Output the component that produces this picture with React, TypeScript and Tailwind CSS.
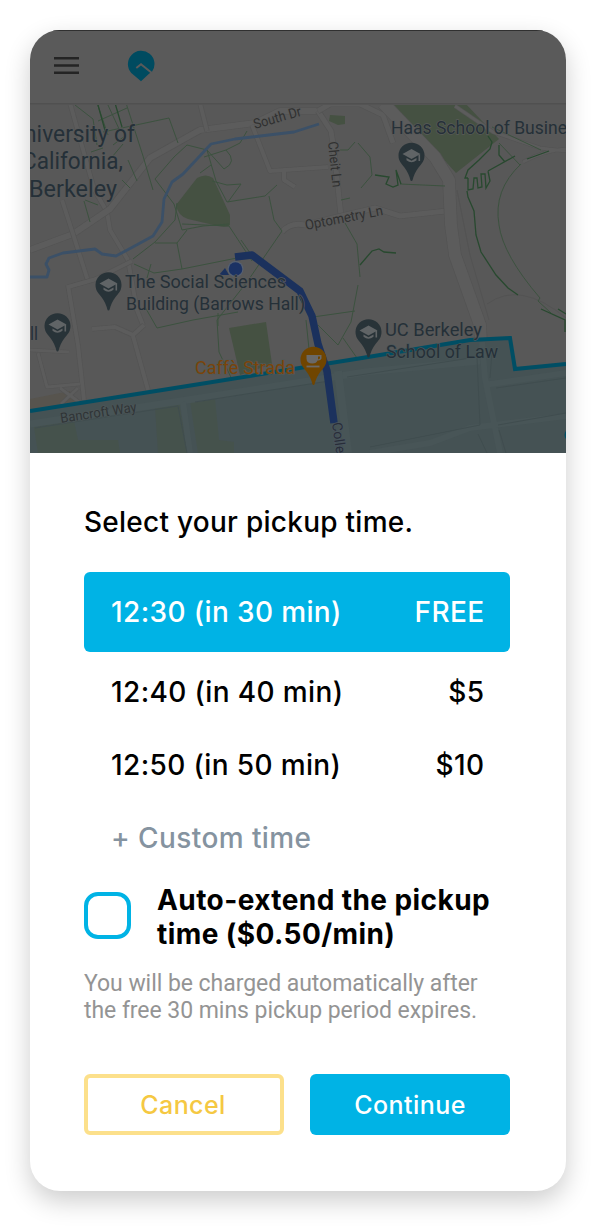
const label = "Roboto, 'Open Sans', sans-serif";

function Road({ d, w = 5 }: { d: string; w?: number }) {
  return (
    <g fill="none" strokeLinejoin="round">
      <path d={d} stroke="#535353" strokeWidth={w + 1.2} />
      <path d={d} stroke="#5c5c5c" strokeWidth={w} />
    </g>
  );
}

function Pin({ x, y, color = '#283338' }: { x: number; y: number; color?: string }) {
  return (
    <g transform={`translate(${x} ${y})`}>
      <path d="M0 25.500c-1.300 0-1.300-2-1.800-3.500C-3.600 16.500-6 13-9.500 9A13 13 0 1 1 9.500 9C6 13 3.600 16.500 1.800 22c-.5 1.500-.5 3.500-1.800 3.500z" fill={color} />
    </g>
  );
}

function SchoolPin({ x, y }: { x: number; y: number }) {
  return (
    <g>
      <Pin x={x} y={y} />
      <g transform={`translate(${x} ${y})`}>
        <path d="M-9-1.500 0-6.500 9-1.500 0 3.500z" fill="#606466" />
        <path d="M-5 2.500v2.200q5 4 10 0V2.500L0 5.200z" fill="#606466" />
        <path d="M7.800-1v6.500" stroke="#606466" strokeWidth="1.600" />
      </g>
    </g>
  );
}

function MapLabel({ x, y, w, size, children, fill = '#253038', halo = '#595a5a', rotate = 0 }: { x: number; y: number; w: number; size: number; children: string; fill?: string; halo?: string; rotate?: number }) {
  return (
    <text
      x={x}
      y={y}
      textLength={w}
      lengthAdjust="spacingAndGlyphs"
      fontSize={size}
      fontFamily={label}
      fontWeight="430"
      fill={fill}
      stroke={halo}
      strokeWidth="1.300"
      paintOrder="stroke"
      transform={`rotate(${rotate} ${x} ${y})`}
    >
      {children}
    </text>
  );
}

function CampusMap() {
  return (
    <svg viewBox="30 103 536 350" className="block h-[350px] w-[536px] shrink-0" aria-label="Map of pickup area">
      <rect x="30" y="103" width="536" height="350" fill="#585858" />

      <g fill="#455142">
        <path d="M176 205 197 178Q206 173 213 178L230 215V225Q227 228 218 226L188 219Q178 216 176 205z" />
        <path d="M392 103H465L499 139 456 173z" />
        <path d="M330 115 345 116V124L338 125 329 121z" />
        <path d="M229 328 266 322 272 364 240 375z" />
      </g>
      <path d="M30 399 70 391 77 405 30 411z" fill="#57544e" />

      <Road d="M70 103 94 189 107 212 110 230 128 260 137 310 143 325" w={4} />
      <Road d="M30 250 73 234 110 209 150 158 200 130 255 123 280 111 318 111" w={6} />
      <Road d="M62 200 73 234 88 281" w={4} />
      <Road d="M200 103 207 131M252 125 270 171 285 170 328 167M284 170 284 180 295 187" w={4} />
      <Road d="M318 111 331 131 334 150 341 216" w={5} />
      <Road d="M318 111 330 104H360L383 115 393 143" w={5} />
      <Road d="M282 232Q290 222 305 225L341 216 375 208 400 216 446 211" w={5} />
      <Road d="M383 103 435 157 449 180 451 225 455 255 480 325 483 376 493 453" w={12} />
      <Road d="M68 285 78 345 84 400M68 287 96 279 132 261M92 329 115 327 133 335 144 325M133 336 148 390" w={4} />
      <Road d="M38 353 47 387 80 384M60 388 79 402M78 388 61 404M30 350 69 352" w={3} />
      <Road d="M455 106 493 132 540 148 566 151M523 162Q545 150 566 149" w={3} />

      <g fill="none" stroke="#535353" strokeWidth="1">
        <path d="M487 304Q520 280 566 318" />
        <path d="M457 190 470 255 489 320" />
      </g>

      <g fill="none" stroke="#3c523f" strokeWidth="1">
        <path d="M75 105 93 119 97 145M97 103 108 135M107 103 120 131M126 103 143 156 153 190M98 121 127 108M103 132 169 118 178 143M113 145 126 135M91 152 103 148M112 157 123 144M128 160 137 181" />
        <path d="M155 179 174 204 182 230 203 226 229 224M155 179 174 157 187 145 207 150 216 181 227 202 265 196 277 185M133 259 155 242 175 220 177 203M155 243 177 243 182 269 154 273 134 264M177 243 187 230M151 264 147 278M182 269 237 258" />
        <path d="M204 157 226 150 240 143 247 131M226 150Q238 162 224 169L207 150M212 181 227 185 241 184 228 202M200 173 211 165" />
        <path d="M269 196 274 220 282 231 247 282 217 320 219 352 235 386M182 224 229 226 252 261M241 240 255 260" />
        <path d="M85 200 98 205M84 201 90 222M122 180 130 188M145 307 157 328 193 320 238 312M218 313 218 326M313 317 355 311M306 320 309 349M318 325 338 345 351 322 358 285M343 338 357 358" />
        <path d="M340 150 348 150 355 142M358 143 370 157 372 175 361 188M341 200 350 198M345 223 357 244 360 277M492 127 541 150M499 143 520 165M400 184 445 186" />
        <path d="M521 164Q493 190 499 225Q503 255 540 298L538 301 551 313" />
      </g>
      <g fill="none" stroke="#28492f" strokeWidth="1.300">
        <path d="M98 105 106 134M115 103 122 127M360 265 372 251 379 249 384 252 396 253M375 175 389 177 386 184 393 187 398 185 396 170 401 184" />
        <path d="M488 136 492 142 490 149 479 160 468 170 465 178 468 178M488 171 515 156 M499 145 499 155 505 162M468 178 468 190 473 189 474 178 477 178 478 188 482 187 481 174 485 174 486 188 490 181 488 171M467 191 468 197 474 211 476 235 481 252 496 275 508 288 518 295M527 159 549 151M541 309 565 320 565 332M558 309 566 314" />
      </g>

      <path d="M30 277 47 277 49 270 46 264 49 258 63 253 95 249 102 254 116 256 131 248 153 236 162 222 164 199 172 182 183 174 211 144 235 139 294 132 319 124" fill="none" stroke="#3b5067" strokeWidth="2.800" strokeLinejoin="round" />

      <path d="M30 411 200 384 362 358 470 340 510 338 515 369 566 364V453H30z" fill="#455254" />
      <g fill="#46524b" opacity=".8">
        <path d="M34 427 74 421 78 440 118 440 120 453H38z" />
        <path d="M155 407 179 403 188 453H158zM190 401 215 399 219 440 234 442V453H198z" />
      </g>
      <g fill="none" stroke="#485557">
        <path d="M30 424 181 401 365 372 480 361" strokeWidth="7" />
        <path d="M183 402 190 453M482 342 485 378 500 453M484 385 566 373M370 453 430 443 470 428 566 416" strokeWidth="6" />
        <path d="M338 371 348 453" strokeWidth="8" />
      </g>
      <g fill="none" stroke="#404d4f" strokeWidth="1">
        <path d="M35 428 178 406 187 453M195 402 329 381 338 453M347 377 477 357 480 425 370 447M490 378 492 352M496 388 566 378M498 425 566 413M478 434 487 453M499 430 506 453" />
      </g>

      <path d="M30 411 200 384 362 358 470 340 510 338 515 369 566 364" fill="none" stroke="#004e64" strokeWidth="4" />
      <circle cx="571" cy="435" r="6.500" fill="#004e64" />

      <path d="M235 257 252 255 300 291 312 316 318 344 327 371 334 423" fill="none" stroke="#1b315d" strokeWidth="7.500" strokeLinejoin="round" />
      <path d="M219 275 225 268 229 275z" fill="#1b315d" />
      <circle cx="235.500" cy="269" r="8" fill="#566071" />
      <circle cx="235.500" cy="269" r="6.800" fill="#1b3264" />

      <MapLabel x={24} y={142} w={111} size={23}>niversity of</MapLabel>
      <MapLabel x={22} y={169} w={101} size={23}>California,</MapLabel>
      <MapLabel x={29} y={197} w={88} size={23}>Berkeley</MapLabel>
      <MapLabel x={391} y={134} w={176} size={18.5}>Haas School of Busine</MapLabel>
      <MapLabel x={125} y={288} w={161} size={18}>The Social Sciences</MapLabel>
      <MapLabel x={126} y={310} w={179} size={18}>Building (Barrows Hall)</MapLabel>
      <MapLabel x={385} y={336} w={97} size={18}>UC Berkeley</MapLabel>
      <MapLabel x={386} y={357.5} w={112} size={18} halo="#4a5658">School of Law</MapLabel>
      <MapLabel x={30} y={340} w={8} size={18}>ll</MapLabel>
      <MapLabel x={195} y={373.5} w={100} size={18.5} fill="#7a440a" halo="#525956">Caffè Strada</MapLabel>
      <MapLabel x={255} y={129} w={49} size={14} rotate={-16} fill="#303030">South Dr</MapLabel>
      <MapLabel x={306} y={230} w={79} size={14} rotate={-11} fill="#303030">Optometry Ln</MapLabel>
      <MapLabel x={328} y={142} w={46} size={14} rotate={84} fill="#303030">Cheit Ln</MapLabel>
      <MapLabel x={61} y={423} w={77} size={14} rotate={-8.5} fill="#2f3436" halo="#4c5557">Bancroft Way</MapLabel>
      <MapLabel x={332} y={423} w={31} size={14} rotate={82} fill="#282d38" halo="#4a5560">Colle</MapLabel>

      <SchoolPin x={411.5} y={155.5} />
      <SchoolPin x={108.5} y={285} />
      <SchoolPin x={57.5} y={326} />
      <SchoolPin x={368.5} y={332} />
      <Pin x={313.5} y={359.5} color="#704500" />
      <g transform="translate(313.500 359.500)">
        <path d="M-7-4.500H8V-1Q7 1.500 4 1 3 4-1 4-7 4-7-1z" fill="#696969" />
        <path d="M4.500-3H6.500V-1L4.500 0z" fill="#704500" />
        <path d="M-7 7H6" stroke="#696969" strokeWidth="1.800" />
      </g>

      <rect x="30" y="103" width="536" height="1" fill="#505050" />
      <rect x="30" y="104" width="536" height="1" fill="#545454" />
    </svg>
  );
}

function Option({ time, price }: { time: string; price: string }) {
  return (
    <div className="flex h-[73px] items-center justify-between pr-[25.5px] pl-[27px]">
      <span>{time}</span>
      <span>{price}</span>
    </div>
  );
}

export default function App() {
  return (
    <div className="h-[1229px] w-[596px] overflow-hidden bg-white pt-[30px] pl-[30px] font-['Inter',sans-serif] font-[470] [font-optical-sizing:none]">
      <main className="flex h-[1161px] w-[535.5px] flex-col overflow-hidden rounded-[30px] bg-white shadow-[0_10px_26px_rgba(0,0,0,0.2)]">
        <header className="flex h-[73px] shrink-0 items-center border-t border-[#303030] bg-[#5a5a5a] pb-[3px] pl-6">
          <svg viewBox="0 0 25 17" className="h-[17px] w-[25px]" aria-label="Menu">
            <path d="M0 1.300H25M0 8.500H25M0 15.700H25" stroke="#242424" strokeWidth="2.600" />
          </svg>
          <svg viewBox="0 0 28 32" className="ml-12 h-8 w-7" aria-label="Pickup home">
            <path d="M14 31.200 4.300 23A13.300 13.300 0 1 1 25 21.800L22.300 23.500z" fill="#004b60" />
            <path d="M9.300 18 14 14.300 25.500 23.500" fill="none" stroke="#5a5a5a" strokeWidth="2" />
          </svg>
        </header>
        <CampusMap />
        <section className="flex w-[534px] flex-col px-[54px] pt-[52px] text-[28px] leading-[34px] tracking-[0.38px] text-black">
          <h1 className="tracking-[0.26px]">Select your pickup time.</h1>
          <div className="mt-[33px] flex h-20 items-center justify-between rounded-[6px] bg-[#00b3e5] pr-[25.5px] pl-[27px] text-white">
            <span>12:30 (in 30 min)</span>
            <span>FREE</span>
          </div>
          <div className="mt-[3px]">
            <Option time="12:40 (in 40 min)" price="$5" />
            <Option time="12:50 (in 50 min)" price="$10" />
            <button className="flex h-[73px] items-center pl-[27px] tracking-[0.42px] text-[#8593a0]">+ Custom time</button>
          </div>
          <label className="mt-[9px] flex items-center">
            <span className="mb-[3px] size-[47px] shrink-0 rounded-[14px] border-4 border-[#00b3e5]" />
            <span className="ml-[26px] font-bold tracking-[0.42px] whitespace-nowrap">Auto-extend the pickup<br />time ($0.50/min)</span>
          </label>
          <p className="mt-[19px] font-[Roboto,sans-serif] text-[23px] leading-[27px] font-normal tracking-[-0.05px] whitespace-nowrap text-[#949494]">
            You will be charged automatically after<br />the free 30 mins pickup period expires.
          </p>
          <div className="mt-[50px] flex gap-[26px] text-[25px]">
            <button className="h-[61px] w-[200px] shrink-0 rounded-[6px] border-4 border-[#fce08b] pr-[2px] text-[#f5c842]">Cancel</button>
            <button className="h-[61px] w-[200px] shrink-0 rounded-[6px] bg-[#00b3e5] tracking-[0.45px] text-white">Continue</button>
          </div>
        </section>
      </main>
    </div>
  );
}
